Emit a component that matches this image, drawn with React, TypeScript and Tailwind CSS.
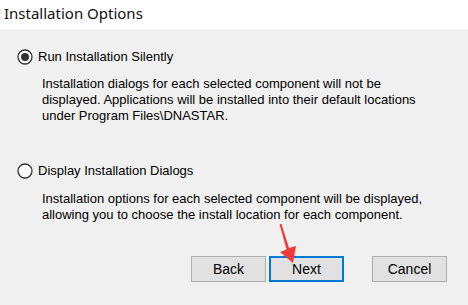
import React from "react";

function Radio({ checked }: { checked: boolean }) {
  return (
    <svg width="16" height="16" viewBox="0 0 16 16" className="shrink-0 -ml-[1px]">
      <circle cx="8" cy="8" r="7" fill="#ffffff" stroke="#333333" strokeWidth="1.3" />
      {checked && <circle cx="8" cy="8" r="4" fill="#333333" />}
    </svg>
  );
}

function Btn({ label, focus }: { label: string; focus?: boolean }) {
  return (
    <div
      className={
        "w-[75px] h-[26px] flex items-center justify-center bg-[#e1e1e1] text-[14px] text-black " +
        (focus ? "border-2 border-[#0078d7]" : "border border-[#adadad]")
      }
    >
      {label}
    </div>
  );
}

export default function App() {
  return (
    <div className="w-[468px] h-[305px] bg-[#f0f0f0] relative overflow-hidden" style={{ fontFamily: '"Liberation Sans", Arial, sans-serif' }}>
      <div className="h-[29px] bg-white pl-[4px] pt-[2px] text-[15px] text-[#111]" style={{ fontFamily: '"Noto Sans", "Open Sans", sans-serif' }}>
        Installation Options
      </div>
      <div className="pl-[18px] pt-[20px] text-[13px] text-black leading-[16px]">
        <div className="flex items-center gap-[5px] h-[16px]">
          <Radio checked />
          <span>Run Installation Silently</span>
        </div>
        <div className="pl-[24px] pt-[11px]">
          Installation dialogs for each selected component will not be
          <br />
          displayed. Applications will be installed into their default locations
          <br />
          under Program Files\DNASTAR.
        </div>
        <div className="flex items-center gap-[5px] h-[16px] mt-[39px]">
          <Radio checked={false} />
          <span>Display Installation Dialogs</span>
        </div>
        <div className="pl-[24px] pt-[12px]">
          Installation options for each selected component will be displayed,
          <br />
          allowing you to choose the install location for each component.
        </div>
      </div>
      <div className="flex pl-[191px] pt-[33px]">
        <Btn label="Back" />
        <div className="w-[3px]" />
        <Btn label="Next" focus />
        <div className="w-[28px]" />
        <Btn label="Cancel" />
      </div>
      <svg className="absolute left-0 top-0" width="468" height="305" viewBox="0 0 468 305">
        <polygon points="279.5,224 281.5,224 289,248 296,246 293,263 280,252 286.5,249.5" fill="#f23a3a" />
      </svg>
    </div>
  );
}
